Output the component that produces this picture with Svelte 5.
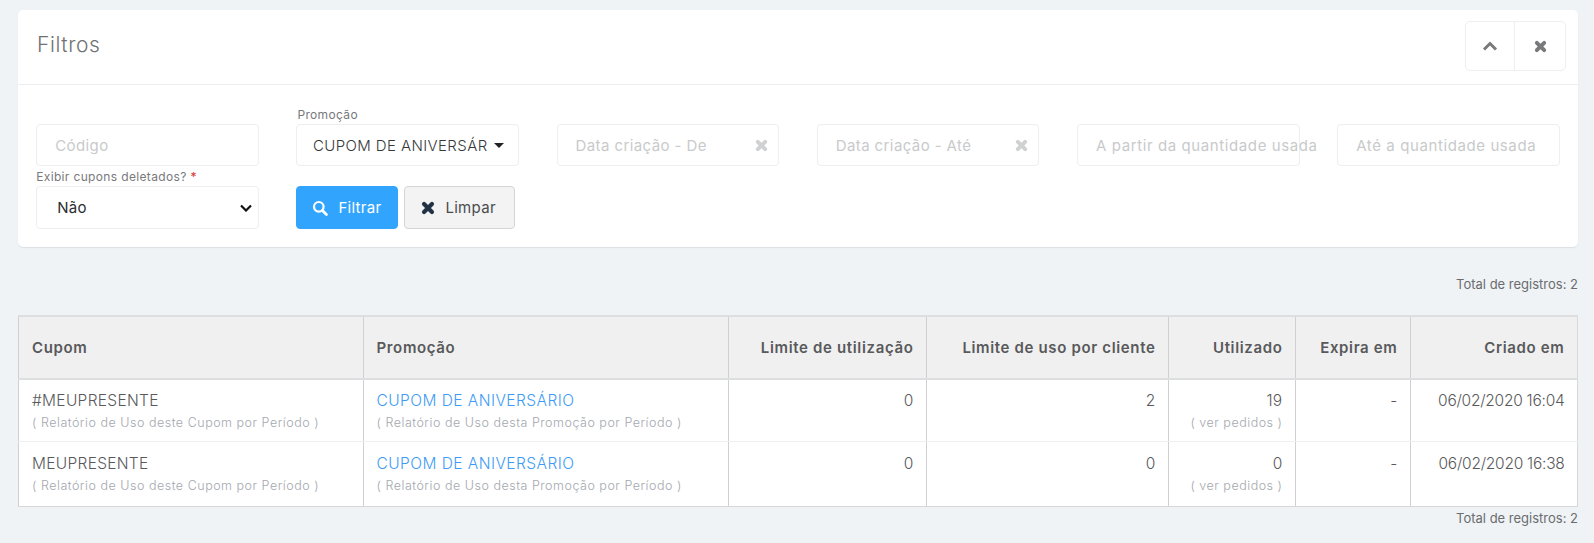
<script>
  const filters = [
    { text: 'Código' },
    { label: 'Promoção', text: 'CUPOM DE ANIVERSÁRIO', combo: true },
    { text: 'Data criação - De', clear: true },
    { text: 'Data criação - Até', clear: true },
    { text: 'A partir da quantidade usada', wide: true },
    { text: 'Até a quantidade usada', wide: true }
  ];
  const rows = [
    { code: '#MEUPRESENTE', limit: 0, perClient: 2, used: 19, created: '06/02/2020 16:04' },
    { code: 'MEUPRESENTE', limit: 0, perClient: 0, used: 0, created: '06/02/2020 16:38' }
  ];
</script>

{#snippet times(size)}
  <svg width={size} height={size} viewBox="0 0 12 12" aria-hidden="true">
    <path d="M2.6 2.6l6.8 6.8M9.4 2.6l-6.8 6.8" fill="none" stroke="currentColor" stroke-width="3.6" stroke-linecap="round" />
  </svg>
{/snippet}

<main class="page">
  <section class="card">
    <header class="card-head">
      <h2>Filtros</h2>
      <div class="tools">
        <button aria-label="Recolher">
          <svg width="16" height="16" viewBox="0 0 16 16" aria-hidden="true">
            <path d="M2 11.5l6-6 6 6" fill="none" stroke="currentColor" stroke-width="3" />
          </svg>
        </button>
        <button aria-label="Fechar">{@render times(13)}</button>
      </div>
    </header>

    <div class="card-body">
      <div class="grid">
        {#each filters as f}
          <div class="cell">
            {#if f.label}<span class="label top">{f.label}</span>{/if}
            {#if f.combo}
              <div class="field combo">
                <span class="combo-text">{f.text}</span>
                <i class="caret"></i>
              </div>
            {:else}
              <div class="field">
                <span class="ph" class:wide={f.wide}>{f.text}</span>
                {#if f.clear}<span class="clear">{@render times(13)}</span>{/if}
              </div>
            {/if}
          </div>
        {/each}
      </div>

      <div class="grid second">
        <div class="cell">
          <span class="label">Exibir cupons deletados? <b>*</b></span>
          <select class="native">
            <option>Não</option>
            <option>Sim</option>
          </select>
        </div>
        <div class="actions">
          <button class="btn primary">
            <svg width="16" height="16" viewBox="0 0 16 16" aria-hidden="true">
              <circle cx="6.8" cy="6.8" r="4.8" fill="none" stroke="currentColor" stroke-width="2.2" />
              <path d="M10.4 10.4l4 4" stroke="currentColor" stroke-width="2.8" stroke-linecap="round" />
            </svg>
            Filtrar
          </button>
          <button class="btn ghost">
            <span class="x">{@render times(14)}</span>
            Limpar
          </button>
        </div>
      </div>
    </div>
  </section>

  <p class="total first">Total de registros: 2</p>

  <table>
    <colgroup>
      <col style="width:345px" />
      <col style="width:365px" />
      <col style="width:198px" />
      <col style="width:242px" />
      <col style="width:127px" />
      <col style="width:115px" />
      <col style="width:167px" />
    </colgroup>
    <thead>
      <tr>
        <th>Cupom</th>
        <th>Promoção</th>
        <th class="num">Limite de utilização</th>
        <th class="num">Limite de uso por cliente</th>
        <th class="num">Utilizado</th>
        <th class="num">Expira em</th>
        <th class="num">Criado em</th>
      </tr>
    </thead>
    <tbody>
      {#each rows as r}
        <tr>
          <td class="first-col">
            {r.code}
            <small>( Relatório de Uso deste Cupom por Período )</small>
          </td>
          <td>
            <span class="link">CUPOM DE ANIVERSÁRIO</span>
            <small>( Relatório de Uso desta Promoção por Período )</small>
          </td>
          <td class="num">{r.limit}</td>
          <td class="num">{r.perClient}</td>
          <td class="num">{r.used}<small>( ver pedidos )</small></td>
          <td class="num">-</td>
          <td class="num date">{r.created}</td>
        </tr>
      {/each}
    </tbody>
  </table>

  <p class="total">Total de registros: 2</p>
</main>

<style>
  :global(body) {
    background: #eff3f6;
    color: #58595b;
    font-family: "Inter", "Open Sans", sans-serif;
  }
  .page {
    padding: 10px 16px 0 18px;
    height: 533px;
    overflow: hidden;
  }
  .card {
    background: #fff;
    border-radius: 5px;
    box-shadow: 0 1px 1px rgba(0, 0, 0, 0.08);
    height: 237px;
  }
  .card-head {
    height: 75px;
    box-sizing: border-box;
    border-bottom: 1px solid #eceeef;
    display: flex;
    justify-content: space-between;
    padding: 11px 12px 0 19px;
  }
  h2 {
    margin: 12px 0 0;
    font-size: 21px;
    font-weight: 300;
    color: #6f7173;
    line-height: 24px;
    letter-spacing: 0.6px;
  }
  .tools {
    display: flex;
    width: 101px;
    height: 50px;
    border: 1px solid #eceeef;
    border-radius: 5px;
    box-sizing: border-box;
  }
  .tools button {
    flex: 1;
    border: 0;
    background: none;
    padding: 0;
    color: #77797b;
    display: flex;
    align-items: center;
    justify-content: center;
  }
  .tools button:first-child {
    flex: 0 0 48px;
  }
  .tools button + button {
    border-left: 1px solid #eceeef;
  }
  .card-body {
    padding: 20px 0 0 18.2px;
  }
  .grid {
    display: grid;
    grid-template-columns: repeat(6, 222.6px);
    column-gap: 37.6px;
    align-items: end;
  }
  .second {
    margin-top: 2px;
  }
  .cell {
    display: flex;
    flex-direction: column;
  }
  .label {
    font-size: 12px;
    letter-spacing: 0.35px;
    line-height: 18px;
    color: #77797b;
    white-space: nowrap;
  }
  .label.top {
    line-height: 19px;
    margin-left: 1px;
  }
  .label b {
    color: #d9302c;
    font-weight: 400;
  }
  .field {
    height: 42px;
    box-sizing: border-box;
    border: 1px solid #eceeef;
    border-radius: 4px;
    display: flex;
    align-items: center;
    justify-content: space-between;
    padding: 0 10px 0 18px;
    font-size: 15px;
    letter-spacing: 0.4px;
    white-space: nowrap;
  }
  .ph {
    color: #c9cacb;
    font-weight: 400;
    flex: none;
  }
  .ph.wide {
    letter-spacing: 0.6px;
  }
  .clear {
    display: flex;
    color: #d0d1d2;
  }
  .combo {
    padding: 0 14px 0 15.5px;
    color: #36383a;
    font-weight: 300;
  }
  .combo-text {
    width: 175px;
    overflow: hidden;
    flex: none;
  }
  .caret {
    border-top: 5px solid #222;
    border-left: 5px solid transparent;
    border-right: 5px solid transparent;
  }
  .native {
    height: 43px;
    border: 1px solid #eceeef;
    border-radius: 4px;
    font: inherit;
    font-size: 15px;
    letter-spacing: 0.3px;
    color: #2b2d2f;
    padding: 0 0 0 20px;
    appearance: none;
    background: #fff url("data:image/svg+xml,%3Csvg xmlns='http://www.w3.org/2000/svg' width='12' height='8' viewBox='0 0 12 8'%3E%3Cpath d='M1 1.5l5 5 5-5' fill='none' stroke='%23111' stroke-width='2.2'/%3E%3C/svg%3E") no-repeat right 6px center;
  }
  .actions {
    display: flex;
    gap: 6px;
    grid-column: span 2;
  }
  .btn {
    height: 43px;
    box-sizing: border-box;
    border-radius: 4px;
    font: inherit;
    font-size: 15px;
    letter-spacing: 0.3px;
    display: inline-flex;
    align-items: center;
    white-space: nowrap;
  }
  .primary {
    width: 102px;
    background: #31a5fd;
    border: 1px solid #31a5fd;
    color: #fff;
    padding: 0 0 0 15px;
    gap: 10px;
  }
  .ghost {
    width: 111px;
    background: #f3f3f3;
    border: 1px solid #d5d5d5;
    color: #4a4c4e;
    padding: 0 0 0 16px;
    gap: 10px;
  }
  .x {
    display: flex;
    color: #1f3344;
  }
  .total {
    margin: 0;
    text-align: right;
    font-size: 13px;
    line-height: 16px;
    color: #6a6c6e;
  }
  .first {
    margin: 29px 0 23px;
  }
  table {
    width: 1560px;
    table-layout: fixed;
    border-collapse: collapse;
    background: #fff;
    border: 1px solid #d6d8da;
    border-top: 2px solid #dcdee0;
    font-size: 15.5px;
  }
  th,
  td {
    border-left: 1px solid #cfd0d1;
    padding: 0 12.5px;
    text-align: left;
    vertical-align: top;
    white-space: nowrap;
  }
  th:first-child,
  .first-col {
    padding-left: 13px;
  }
  th {
    height: 61px;
    background: #f0f0f0;
    border-bottom: 2px solid #dcdee0;
    vertical-align: middle;
    font-weight: 600;
    font-size: 15px;
    letter-spacing: 0.65px;
    color: #58595b;
  }
  td {
    height: 62px;
    box-sizing: border-box;
    padding-top: 11px;
    line-height: 19px;
    font-weight: 300;
    letter-spacing: 0.3px;
    border-bottom: 1px solid #eceeef;
  }
  tbody tr:last-child td {
    height: 65px;
    border-bottom: 1px solid #d6d8da;
    padding-top: 12px;
  }
  .num {
    text-align: right;
  }
  .date {
    letter-spacing: -0.25px;
  }
  small {
    display: block;
    font-size: 12.5px;
    letter-spacing: 0.52px;
    line-height: 16px;
    margin-top: 5px;
    color: #a4a8ae;
    font-weight: 300;
  }
  .link {
    color: #3d9bf5;
    letter-spacing: 0.45px;
  }
  .total:last-child {
    margin-top: 3px;
  }
</style>
